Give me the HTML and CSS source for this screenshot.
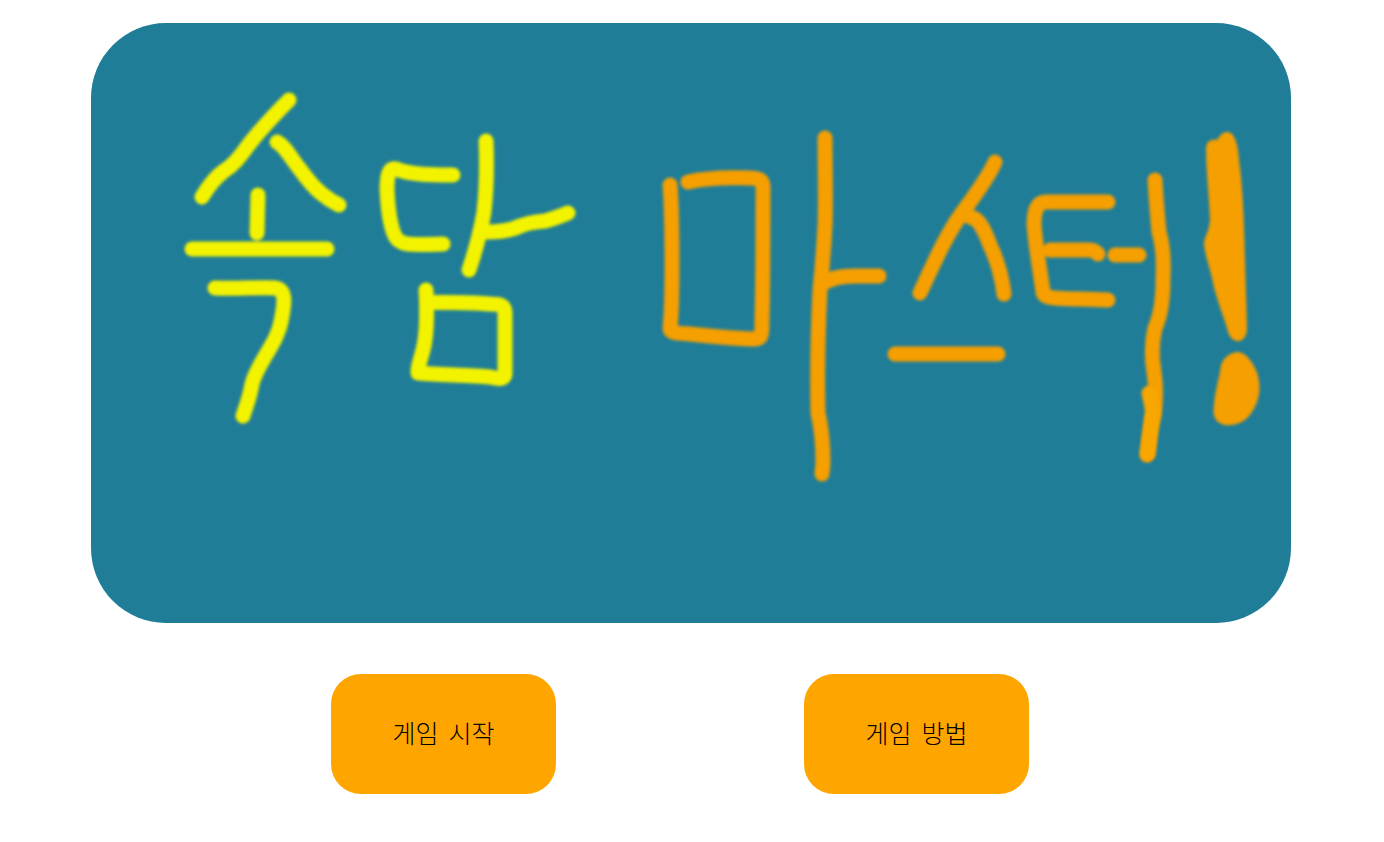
FILE: index.html
```html
<!DOCTYPE html>
<html lang="ko">
<head>
<meta charset="utf-8">
<title>속담 마스터!</title>
<link rel="stylesheet" href="styles.css">
</head>
<body>
<main class="screen">
  <div class="title-card">
    <svg class="title-art" viewBox="91 23 1200 600" role="img" aria-label="속담 마스터!">
      <defs><filter id="soft" filterUnits="userSpaceOnUse" x="91" y="23" width="1200" height="600"><feGaussianBlur stdDeviation="1.4"/></filter></defs>
      <g class="ink yellow" filter="url(#soft)">
        <path d="M289 100 C276 113 262 128 250 143 C240 156 236 163 224 171 C214 178 208 187 202 197"/>
        <path d="M277 142 C285 146 291 158 299 168 C307 179 314 188 322 194 C328 199 333 202 339 205"/>
        <path d="M258 195 L257 233"/>
        <path d="M192 249 L327 249"/>
        <path d="M215 288 C235 289 258 287 275 288 C284 289 285 298 283 310 C281 325 278 335 270 348 C262 362 255 372 252 384 C250 397 246 406 243 416"/>
        <path d="M453 175 C430 175 412 175 396 169 C389 167 387 175 387 190 C388 210 390 226 395 236 C400 246 410 245 443 244"/>
        <path d="M486 141 C487 165 487 185 484 212 C480 235 474 255 469 270"/>
        <path d="M486 232 C500 232 510 231 520 226 C530 222 535 222 545 221 C553 219 560 216 568 213"/>
        <path d="M426 290 C427 310 427 335 423 350 C420 362 417 369 418 373 C440 375 470 375 490 377 C498 379 506 380 505 372 C505 350 505 330 505 313 C505 305 500 304 490 304 C470 302 445 303 427 302"/>
      </g>
      <g class="ink orange" filter="url(#soft)">
        <path d="M670 185 C672 210 672 235 672 265 C672 290 672 310 670 328 C670 333 675 333 690 334 C710 336 735 339 755 339 C762 339 762 334 762 320 C763 280 763 240 763 200 C763 182 765 178 750 178 C725 177 705 178 688 182"/>
        <path d="M825 138 C825 170 826 200 825 225 C824 245 822 270 820 290 C818 330 817 370 818 413 C822 430 823 450 823 462 C823 468 822 470 822 474"/>
        <path d="M821 285 C830 278 840 276 855 276 C865 276 872 276 879 276"/>
        <path d="M995 162 C988 178 975 195 962 213 C948 232 935 260 920 293"/>
        <path d="M970 217 C980 218 985 232 990 245 C998 262 1002 277 1004 294"/>
        <path d="M895 354 L998 354"/>
        <path d="M1108 202 C1085 202 1065 202 1045 202 C1036 203 1034 212 1034 225 C1036 250 1041 275 1043 292 C1044 300 1060 298 1108 300"/>
        <path d="M1050 250 L1090 250 C1094 250 1096 252 1098 254"/>
        <path d="M1115 255 L1139 255"/>
        <path d="M1155 180 C1156 200 1158 220 1159 232 C1163 245 1164 260 1163 280 C1163 300 1161 315 1155 328 C1151 345 1152 360 1154 372 C1156 385 1156 400 1154 415 C1150 430 1149 440 1147 455"/>
      </g>
      <g class="ink thick" filter="url(#soft)">
        <path d="M1149 393 L1153 412"/>
        <path d="M1152 415 L1148 453"/>
      </g>
      <g class="bang" filter="url(#soft)">
        <path d="M1227 132 C1235 132 1238 145 1239 160 C1243 190 1244 220 1245 260 L1247 328 C1247 345 1230 346 1227 328 C1222 312 1215 295 1212 278 C1209 265 1204 252 1204 243 C1205 235 1209 232 1210 220 C1209 195 1206 170 1206 148 C1207 140 1212 139 1217 140 C1220 135 1223 132 1227 132 Z"/>
        <path d="M1238 352 C1246 353 1251 360 1256 370 C1262 385 1260 400 1252 412 C1245 423 1235 426 1225 425 C1216 423 1212 417 1214 405 C1215 390 1219 380 1221 365 C1224 357 1231 352 1238 352 Z"/>
      </g>
    </svg>
  </div>
  <div class="actions">
    <button class="action" type="button">게임 시작</button>
    <button class="action" type="button">게임 방법</button>
  </div>
</main>
</body>
</html>
```

FILE: styles.css
```css
html, body {
  margin: 0;
  padding: 0;
  background: #ffffff;
}

.screen {
  width: 1200px;
  padding: 23px 0 0 91px;
}

.title-card {
  width: 1200px;
  height: 600px;
  border-radius: 75px;
  background: #1f7d97;
  overflow: hidden;
}

.title-art {
  display: block;
  width: 100%;
  height: 100%;
}

.ink {
  fill: none;
  stroke-width: 15;
  stroke-linecap: round;
  stroke-linejoin: round;
}

.yellow { stroke: #f3f300; }
.orange { stroke: #f59f03; }
.thick { stroke: #f8a602; }
.bang { fill: #f59f03; }

.actions {
  display: flex;
  gap: 248px;
  margin-top: 51px;
  padding-left: 240px;
}

.action {
  width: 225px;
  height: 120px;
  border: 0;
  border-radius: 30px;
  background: #ffa500;
  color: #000000;
  font-family: "Noto Sans CJK KR", "Liberation Sans", sans-serif;
  font-size: 25px;
  font-weight: 300;
  line-height: 30px;
  word-spacing: 3px;
  padding: 0 0 4px;
}
```
